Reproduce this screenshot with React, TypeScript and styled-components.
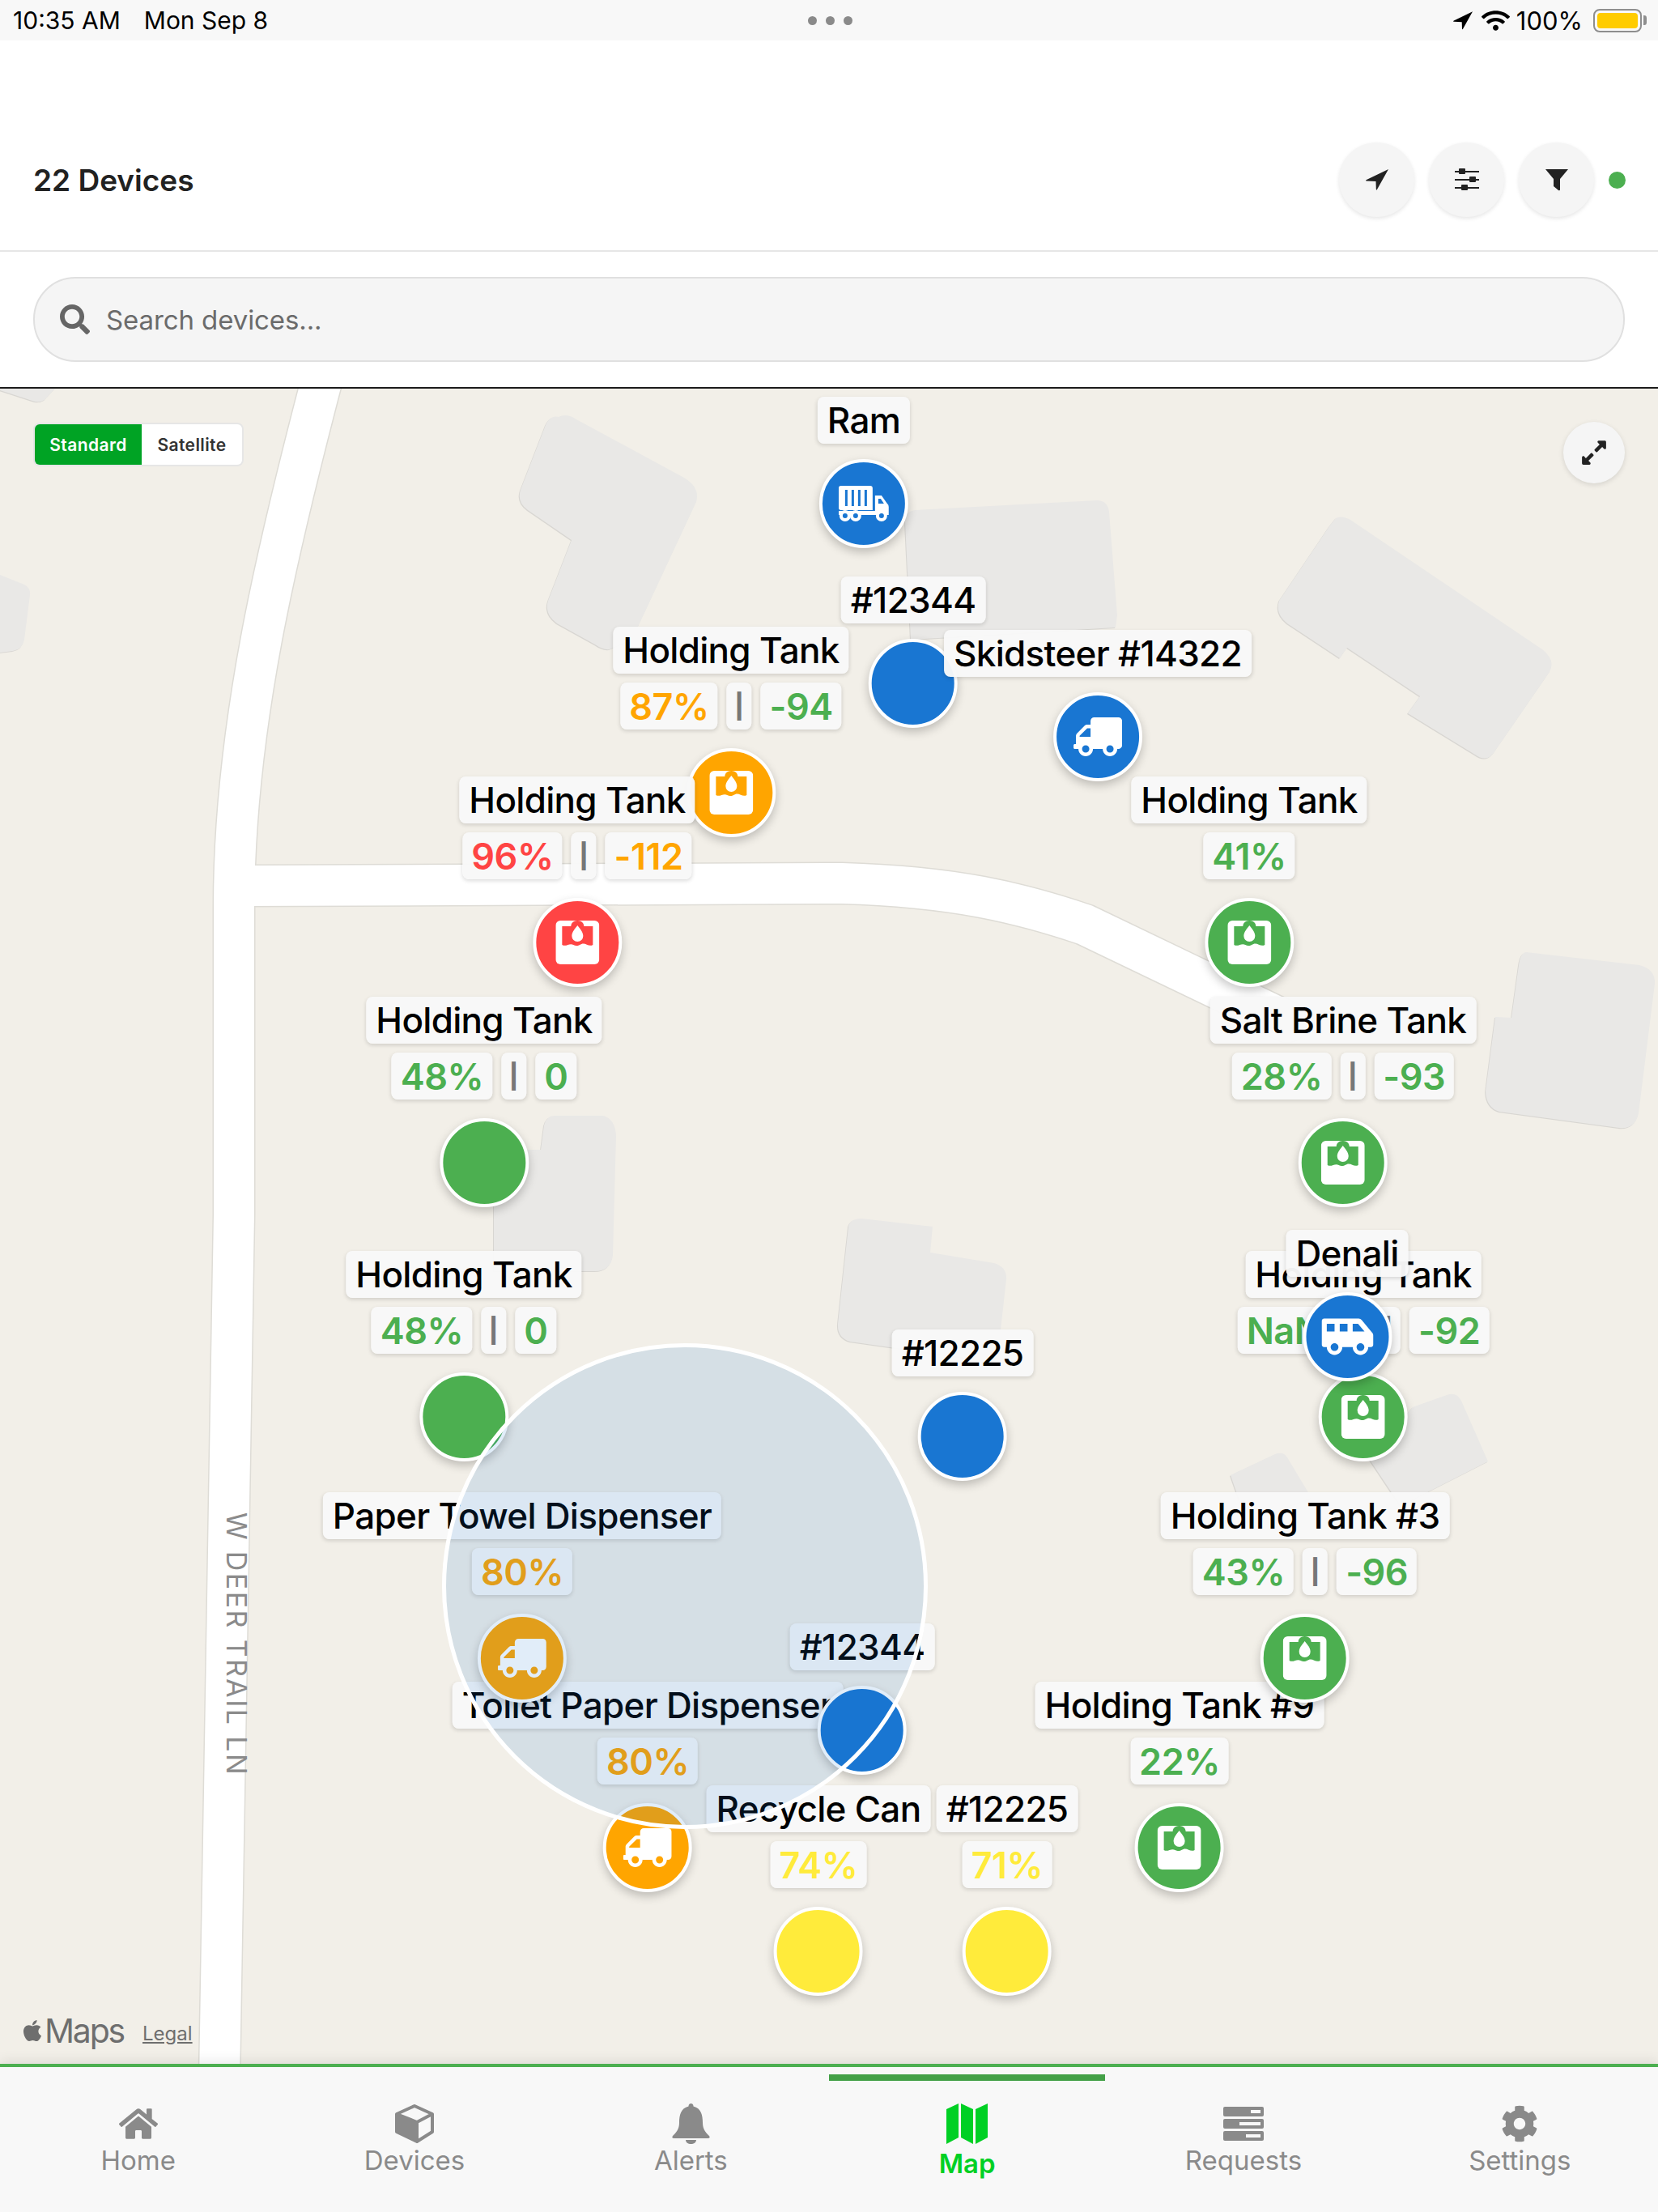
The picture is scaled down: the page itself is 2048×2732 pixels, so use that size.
import React from 'react'
import styled, { createGlobalStyle } from 'styled-components'
import { FaApple, FaCog, FaExpandAlt, FaHome, FaSearch, FaShuttleVan, FaTruck, FaWifi } from 'react-icons/fa'

const MAP_TOP = 480

const GREEN = '#4caf50'
const ORANGE = '#ffa500'
const RED = '#ff4444'
const BLUE = '#1976d2'
const YELLOW = '#ffeb3b'

type PinIcon = 'tank' | 'truck' | 'cargo' | 'van'

type Stat = { text: string; color: string }

type Pin = {
  x: number
  y: number
  name: string
  color: string
  icon?: PinIcon
  stats?: Stat[]
}

// order matters, later pins sit on top of earlier ones
const pins: Pin[] = [
  { x: 1067, y: 622, name: 'Ram', color: BLUE, icon: 'cargo' },
  { x: 1128, y: 844, name: '#12344', color: BLUE },
  { x: 903, y: 979, name: 'Holding Tank', color: ORANGE, icon: 'tank', stats: [{ text: '87%', color: ORANGE }, { text: '-94', color: GREEN }] },
  { x: 1356, y: 910, name: 'Skidsteer #14322', color: BLUE, icon: 'truck' },
  { x: 713, y: 1164, name: 'Holding Tank', color: RED, icon: 'tank', stats: [{ text: '96%', color: RED }, { text: '-112', color: ORANGE }] },
  { x: 1543, y: 1164, name: 'Holding Tank', color: GREEN, icon: 'tank', stats: [{ text: '41%', color: GREEN }] },
  { x: 598, y: 1436, name: 'Holding Tank', color: GREEN, stats: [{ text: '48%', color: GREEN }, { text: '0', color: GREEN }] },
  { x: 1659, y: 1436, name: 'Salt Brine Tank', color: GREEN, icon: 'tank', stats: [{ text: '28%', color: GREEN }, { text: '-93', color: GREEN }] },
  { x: 573, y: 1750, name: 'Holding Tank', color: GREEN, stats: [{ text: '48%', color: GREEN }, { text: '0', color: GREEN }] },
  { x: 1684, y: 1750, name: 'Holding Tank', color: GREEN, icon: 'tank', stats: [{ text: 'NaN%', color: GREEN }, { text: '-92', color: GREEN }] },
  { x: 1664, y: 1651, name: 'Denali', color: BLUE, icon: 'van' },
  { x: 1189, y: 1774, name: '#12225', color: BLUE },
  { x: 800, y: 2282, name: 'Toilet Paper Dispenser', color: ORANGE, icon: 'truck', stats: [{ text: '80%', color: ORANGE }] },
  { x: 645, y: 2048, name: 'Paper Towel Dispenser', color: ORANGE, icon: 'truck', stats: [{ text: '80%', color: ORANGE }] },
  { x: 1065, y: 2137, name: '#12344', color: BLUE },
  { x: 1457, y: 2282, name: 'Holding Tank #9', color: GREEN, icon: 'tank', stats: [{ text: '22%', color: GREEN }] },
  { x: 1612, y: 2048, name: 'Holding Tank #3', color: GREEN, icon: 'tank', stats: [{ text: '43%', color: GREEN }, { text: '-96', color: GREEN }] },
  { x: 1011, y: 2410, name: 'Recycle Can', color: YELLOW, stats: [{ text: '74%', color: YELLOW }] },
  { x: 1244, y: 2410, name: '#12225', color: YELLOW, stats: [{ text: '71%', color: YELLOW }] },
]

const buildings = [
  'M690 515 Q700 510 712 518 L845 590 Q865 602 860 620 L790 770 L780 790 L753 802 Q745 803 735 796 L688 770 Q672 758 677 742 L706 667 L652 630 Q638 620 643 605 L672 530 Q678 512 690 515 Z',
  'M1130 630 L1355 618 Q1368 618 1370 632 L1380 760 L1378 775 L1125 790 L1118 645 Q1118 632 1130 630 Z',
  'M1650 640 Q1657 636 1668 642 L1905 802 Q1922 815 1914 830 L1845 930 Q1836 942 1822 932 L1739 881 L1754 860 L1664 800 L1655 813 L1590 770 Q1575 758 1580 742 L1642 650 Z',
  'M0 480 L68 480 L55 494 Q48 498 40 495 L0 482 Z',
  'M0 710 L30 722 Q38 726 37 735 L30 790 Q28 802 16 804 L0 806 Z',
  'M1885 1176 L2025 1192 Q2045 1197 2044 1215 L2024 1375 Q2020 1395 2000 1393 L1852 1373 Q1836 1368 1835 1348 L1847 1256 L1867 1257 L1876 1192 Q1878 1177 1885 1176 Z',
  'M685 1378 L745 1378 Q760 1382 761 1403 L757 1550 Q755 1570 735 1570 L610 1570 L610 1420 L668 1420 L672 1390 Q675 1378 685 1378 Z',
  'M1064 1505 L1152 1515 L1149 1547 L1228 1560 Q1244 1565 1243 1580 L1234 1660 L1226 1682 L1050 1657 Q1034 1652 1035 1635 L1048 1515 Q1050 1505 1064 1505 Z',
  'M1745 1738 L1790 1722 Q1800 1720 1805 1730 L1838 1805 L1730 1860 L1690 1800 Z',
  'M1520 1822 L1575 1796 Q1585 1792 1590 1800 L1620 1850 L1540 1880 Z',
]

const GlobalStyle = createGlobalStyle`
  html, body {
    margin: 0;
    padding: 0;
    background: #fff;
    font-family: Inter, "Liberation Sans", sans-serif;
  }
  * { box-sizing: border-box; }
`

const Page = styled.div`
  display: flex;
  flex-direction: column;
  width: 2048px;
  height: 2732px;
  overflow: hidden;
`

const StatusBar = styled.div`
  display: grid;
  grid-template-columns: 1fr auto 1fr;
  align-items: center;
  height: 50px;
  padding: 0 13px 0 16px;
  background: #f8f8f8;
  color: #000;
  font-size: 30px;
`

const StatusLeft = styled.div`
  display: flex;
  gap: 29px;
`

const StatusDots = styled.div`
  display: flex;
  gap: 11px;
`

const StatusDot = styled.span`
  width: 11px;
  height: 11px;
  border-radius: 50%;
  background: #8a8a8a;
`

const StatusRight = styled.div`
  display: flex;
  justify-content: flex-end;
  align-items: center;
  font-size: 31px;
`

const Battery = styled.div`
  position: relative;
  width: 60px;
  height: 29px;
  margin-left: 13px;
  margin-right: 7px;
  padding: 3px;
  border: 2px solid #8e8e8e;
  border-radius: 8px;

  &::before {
    content: '';
    display: block;
    height: 100%;
    border-radius: 4px;
    background: #ffcc00;
  }

  &::after {
    content: '';
    position: absolute;
    top: 6px;
    right: -8px;
    width: 4px;
    height: 12px;
    border-radius: 0 3px 3px 0;
    background: #8e8e8e;
  }
`

const Header = styled.header`
  display: flex;
  align-items: center;
  justify-content: space-between;
  height: 261px;
  padding: 85px 40px 0 41px;
  background: #fff;
  border-bottom: 2px solid #e6e6e6;
`

const Title = styled.h1`
  margin: 0;
  color: #222;
  font-size: 37px;
  font-weight: 600;
`

const Actions = styled.div`
  display: flex;
  align-items: center;
  gap: 18px;
`

const ActionButton = styled.button`
  display: flex;
  align-items: center;
  justify-content: center;
  width: 93px;
  height: 92px;
  padding: 0;
  border: 0;
  border-radius: 50%;
  background: #f5f5f5;
  color: #222;
  box-shadow: 0 2px 5px rgba(0, 0, 0, 0.1);
`

const OnlineDot = styled.span`
  width: 21px;
  height: 21px;
  border-radius: 50%;
  background: ${GREEN};
`

const SearchRow = styled.div`
  padding: 31px 41px;
  background: #fff;
  border-bottom: 2px solid #1c1c1c;
`

const SearchBox = styled.label`
  display: flex;
  align-items: center;
  gap: 18px;
  height: 105px;
  padding: 0 31px;
  border: 2px solid #e0e0e0;
  border-radius: 52px;
  background: #f5f5f5;
  color: #666;
`

const SearchInput = styled.input`
  flex: 1;
  border: 0;
  outline: 0;
  background: transparent;
  color: #222;
  font-family: inherit;
  font-size: 33px;
  letter-spacing: -0.1px;

  &::placeholder {
    color: #6b6b6b;
    opacity: 1;
  }
`

const MapArea = styled.main`
  position: relative;
  flex: 1;
  overflow: hidden;
  background: #f2efe8;
`

const MapDrawing = styled.svg`
  position: absolute;
  inset: 0;
  width: 100%;
  height: 100%;
`

const BuildingGroup = styled.g`
  fill: #e9e8e6;
  filter: drop-shadow(-1px 1px 0 #d8d6d2);
`

const RoadName = styled.span`
  position: absolute;
  left: 272px;
  top: 1388px;
  writing-mode: vertical-rl;
  color: #8b8b8b;
  font-size: 34px;
  letter-spacing: 2.4px;
  white-space: nowrap;
`

const MapTypeSwitch = styled.div`
  position: absolute;
  left: 41px;
  top: 42px;
  display: flex;
  height: 54px;
  border: 2px solid #e6e6e6;
  border-radius: 8px;
  overflow: hidden;
  font-size: 21px;
  font-weight: 600;
  letter-spacing: 0.4px;
`

const MapTypeOption = styled.span<{ $active?: boolean }>`
  display: flex;
  align-items: center;
  justify-content: center;
  width: ${({ $active }) => ($active ? '132px' : '124px')};
  background: ${({ $active }) => ($active ? '#00a324' : '#fff')};
  color: ${({ $active }) => ($active ? '#fff' : '#333')};
`

const ExpandButton = styled.button`
  position: absolute;
  right: 41px;
  top: 41px;
  display: flex;
  align-items: center;
  justify-content: center;
  width: 76px;
  height: 76px;
  padding: 0;
  border: 0;
  border-radius: 50%;
  background: #f5f5f5;
  color: #222;
  box-shadow: 0 2px 6px rgba(0, 0, 0, 0.12);
`

const MapsCredit = styled.div`
  position: absolute;
  left: 25px;
  bottom: 16px;
  display: flex;
  align-items: baseline;
  color: #6e6e6e;
`

const MapsWord = styled.span`
  font-size: 41px;
  letter-spacing: -2.2px;
`

const LegalLink = styled.span`
  position: relative;
  top: -3px;
  margin-left: 23px;
  font-size: 24px;
  text-decoration: underline;
`

const PinWrap = styled.div`
  position: absolute;
  display: flex;
  flex-direction: column;
  align-items: center;
  transform: translate(-50%, -100%);
`

const Chip = styled.div`
  display: flex;
  align-items: center;
  justify-content: center;
  height: 58px;
  padding: 0 12px;
  border-radius: 8px;
  background: rgba(248, 248, 248, 0.97);
  box-shadow: 0 2px 5px rgba(0, 0, 0, 0.14);
  white-space: nowrap;
`

const PinName = styled(Chip)`
  color: #000;
  font-size: 44px;
  font-weight: 500;
  letter-spacing: -0.7px;
`

const StatRow = styled.div`
  display: flex;
  gap: 11px;
  margin-top: 11px;
  margin-bottom: 4px;
`

const StatChip = styled(Chip)<{ $color: string }>`
  padding: 0 11px;
  color: ${({ $color }) => $color};
  font-size: 45px;
  font-weight: 600;
  letter-spacing: -0.5px;
`

const StatDivider = styled(Chip)`
  width: 31px;
  padding: 0;
  color: #777;
  font-size: 30px;
  font-weight: 800;
`

const Marker = styled.div<{ $color: string }>`
  display: flex;
  align-items: center;
  justify-content: center;
  width: 110px;
  height: 110px;
  margin-top: 19px;
  border: 4px solid #fff;
  border-radius: 50%;
  background: ${({ $color }) => $color};
  color: #fff;
  box-shadow: 0 5px 12px rgba(0, 0, 0, 0.22);
`

const GeoFence = styled.div`
  position: absolute;
  left: 546px;
  top: 1179px;
  width: 600px;
  height: 600px;
  border: 5px solid #fff;
  border-radius: 50%;
  background: rgba(25, 118, 210, 0.13);
`

const TabBar = styled.nav`
  position: relative;
  display: grid;
  grid-template-columns: repeat(6, 1fr);
  height: 183px;
  border-top: 4px solid ${GREEN};
  background: #f8f8f8;
  box-shadow: 0 -4px 14px rgba(0, 0, 0, 0.08);
`

const Tab = styled.div<{ $active?: boolean }>`
  position: relative;
  display: flex;
  flex-direction: column;
  align-items: center;
  padding-top: 43px;
  color: ${({ $active }) => ($active ? '#00d024' : '#8a8a8a')};

  &::before {
    content: ${({ $active }) => ($active ? "''" : 'none')};
    position: absolute;
    top: 9px;
    left: 0;
    right: 0;
    height: 8px;
    background: #43a047;
  }
`

const TabIconSlot = styled.div`
  display: flex;
  align-items: center;
  justify-content: center;
  height: 54px;
`

const TabLabel = styled.span<{ $active?: boolean }>`
  margin-top: ${({ $active }) => ($active ? '2px' : '-2px')};
  font-size: 33px;
  font-weight: ${({ $active }) => ($active ? 600 : 400)};
  line-height: 40px;
`

const TankIcon = ({ color }: { color: string }) => (
  <svg width="54" height="54" viewBox="0 0 54 54">
    <rect width="54" height="54" rx="6" fill="#fff" />
    <path
      fill={color}
      d="M8 7 H19 C19 4 21 0 27 0 C33 0 35 4 35 7 H46 V30 C41 33 37 27 32 29 C28 31 26 32 22 30 C17 27 13 33 8 30 Z"
    />
    <path fill="#fff" d="M27 6 C30 10 34 14 34 19 A7 7 0 0 1 20 19 C20 14 24 10 27 6 Z" />
  </svg>
)

const CargoIcon = ({ color }: { color: string }) => (
  <svg width="62" height="44" viewBox="0 0 62 44">
    <path
      fill="#fff"
      d="M3 0 H39 A3 3 0 0 1 42 3 V30 H3 A3 3 0 0 1 0 27 V3 A3 3 0 0 1 3 0 Z M45 12 H53 L60 22 A5 5 0 0 1 62 26 V36 H45 Z M0 31 H46 V36 H0 Z"
    />
    {[8, 16, 24, 32].map((x) => (
      <rect key={x} x={x} y="5" width="3" height="20" fill={color} />
    ))}
    <path fill={color} d="M49 16 H52 L56 22 H49 Z" />
    {[8, 21, 53].map((x) => (
      <circle key={x} cx={x} cy="37" r="5" fill={color} stroke="#fff" strokeWidth="4" />
    ))}
  </svg>
)

const PinGlyph = ({ icon, color }: { icon?: PinIcon; color: string }) => {
  if (icon === 'tank') return <TankIcon color={color} />
  if (icon === 'cargo') return <CargoIcon color={color} />
  if (icon === 'truck') return <FaTruck size={60} style={{ transform: 'scaleX(-1)' }} />
  if (icon === 'van') return <FaShuttleVan size={64} />
  return null
}

const ArrowIcon = ({ width, height, color }: { width: number; height: number; color: string }) => (
  <svg width={width} height={height} viewBox="0 0 28 26" fill={color}>
    <path d="M28 0 L14 25 Q13 26.5 12.8 24.5 L12.5 15 L1 14.5 Q-1 14 1 13 Z" />
  </svg>
)

const SlidersIcon = () => (
  <svg width="30" height="28" viewBox="0 0 30 28" fill="#222">
    <rect y="3" width="30" height="2" />
    <rect y="13" width="30" height="2" />
    <rect y="23" width="30" height="2" />
    <rect x="5" width="8" height="7" rx="1" />
    <rect x="18" y="10" width="8" height="7" rx="1" />
    <rect x="8" y="20" width="8" height="7" rx="1" />
  </svg>
)

const FilterIcon = () => (
  <svg width="28" height="28" viewBox="0 0 28 28" fill="#222">
    <path d="M0 1 H28 L18 13 V26 Q18 28 16 27 L10 22 V13 Z" />
  </svg>
)

const CubeIcon = () => (
  <svg width="48" height="48" viewBox="0 0 48 48">
    <path
      fill="none"
      stroke="#8a8a8a"
      strokeWidth="4"
      strokeLinejoin="round"
      d="M24 2 L46 12 V34 L27 46 L2 34 V12 Z M2 12 L27 22 L46 12 M27 22 V46"
    />
    <path fill="#8a8a8a" d="M2 12 L27 22 V46 L2 34 Z" />
  </svg>
)

const BellIcon = () => (
  <svg width="47" height="50" viewBox="0 0 47 50" fill="#8a8a8a">
    <path d="M23.5 0 C25.5 0 26.5 1.5 26.5 3.5 C36 6 38 14 38 24 C38 32 42 36 46 40 Q48 43 44 43 H3 Q-1 43 1 40 C5 36 9 32 9 24 C9 14 11 6 20.5 3.5 C20.5 1.5 21.5 0 23.5 0 Z M17 45 H30 C30 48 27 50 23.5 50 S17 48 17 45 Z" />
  </svg>
)

const FoldedMapIcon = () => (
  <svg width="51" height="50" viewBox="0 0 51 50" fill="#00d024">
    <path d="M0 7 L15 0 V42 L0 50 Z" />
    <path d="M18 0 L33 7 V50 L18 42 Z" />
    <path d="M36 7 L51 0 V42 L36 50 Z" />
  </svg>
)

const ServerIcon = () => (
  <svg width="50" height="42" viewBox="0 0 50 42">
    {[
      { y: 0, slot: 12 },
      { y: 15, slot: 26 },
      { y: 30, slot: 18 },
    ].map(({ y, slot }) => (
      <g key={y}>
        <rect y={y} width="50" height="12" rx="2" fill="#8a8a8a" />
        <rect x={46 - slot} y={y + 4} width={slot} height="4" fill="#f8f8f8" />
      </g>
    ))}
  </svg>
)

const tabs = [
  { label: 'Home', icon: <FaHome size={48} /> },
  { label: 'Devices', icon: <CubeIcon /> },
  { label: 'Alerts', icon: <BellIcon /> },
  { label: 'Map', icon: <FoldedMapIcon />, active: true },
  { label: 'Requests', icon: <ServerIcon /> },
  { label: 'Settings', icon: <FaCog size={46} /> },
]

export default function App() {
  return (
    <Page>
      <GlobalStyle />
      <StatusBar>
        <StatusLeft>
          <span>10:35 AM</span>
          <span>Mon Sep 8</span>
        </StatusLeft>
        <StatusDots>
          <StatusDot />
          <StatusDot />
          <StatusDot />
        </StatusDots>
        <StatusRight>
          <ArrowIcon width={24} height={23} color="#000" />
          <FaWifi size={35} style={{ margin: '0 8px 0 11px' }} />
          <span>100%</span>
          <Battery />
        </StatusRight>
      </StatusBar>

      <Header>
        <Title>22 Devices</Title>
        <Actions>
          <ActionButton>
            <ArrowIcon width={28} height={26} color="#222" />
          </ActionButton>
          <ActionButton>
            <SlidersIcon />
          </ActionButton>
          <ActionButton>
            <FilterIcon />
          </ActionButton>
          <OnlineDot />
        </Actions>
      </Header>

      <SearchRow>
        <SearchBox>
          <FaSearch size={37} />
          <SearchInput placeholder="Search devices..." />
        </SearchBox>
      </SearchRow>

      <MapArea>
        <MapDrawing viewBox={`0 ${MAP_TOP} 2048 2069`} preserveAspectRatio="none">
          <BuildingGroup>
            {buildings.map((d) => (
              <path key={d} d={d} />
            ))}
          </BuildingGroup>
          <g fill="none" strokeLinecap="round" strokeLinejoin="round">
            <path d="M400 460 C342 680 289 900 289 1120 L289 1500 L271 2570" stroke="#dedcd6" strokeWidth="53" strokeLinecap="butt" />
            <path d="M300 1094 L1040 1091 C1180 1095 1260 1115 1340 1142 L1590 1262" stroke="#dedcd6" strokeWidth="53" />
            <path d="M400 460 C342 680 289 900 289 1120 L289 1500 L271 2570" stroke="#fff" strokeWidth="50" strokeLinecap="butt" />
            <path d="M300 1094 L1040 1091 C1180 1095 1260 1115 1340 1142 L1590 1262" stroke="#fff" strokeWidth="50" />
          </g>
        </MapDrawing>

        <RoadName>W DEER TRAIL LN</RoadName>

        <MapTypeSwitch>
          <MapTypeOption $active>Standard</MapTypeOption>
          <MapTypeOption>Satellite</MapTypeOption>
        </MapTypeSwitch>

        <ExpandButton>
          <FaExpandAlt size={34} />
        </ExpandButton>

        <MapsCredit>
          <FaApple size={30} />
          <MapsWord>Maps</MapsWord>
          <LegalLink>Legal</LegalLink>
        </MapsCredit>

        {pins.map((pin) => (
          <PinWrap key={`${pin.name}-${pin.x}`} style={{ left: pin.x, top: pin.y + 55 - MAP_TOP }}>
            <PinName>{pin.name}</PinName>
            {pin.stats && (
              <StatRow>
                {pin.stats.map((stat, index) => (
                  <React.Fragment key={stat.text}>
                    {index > 0 && <StatDivider>|</StatDivider>}
                    <StatChip $color={stat.color}>{stat.text}</StatChip>
                  </React.Fragment>
                ))}
              </StatRow>
            )}
            <Marker $color={pin.color}>
              <PinGlyph icon={pin.icon} color={pin.color} />
            </Marker>
          </PinWrap>
        ))}

        <GeoFence />
      </MapArea>

      <TabBar>
        {tabs.map((tab) => (
          <Tab key={tab.label} $active={tab.active}>
            <TabIconSlot>{tab.icon}</TabIconSlot>
            <TabLabel $active={tab.active}>{tab.label}</TabLabel>
          </Tab>
        ))}
      </TabBar>
    </Page>
  )
}
